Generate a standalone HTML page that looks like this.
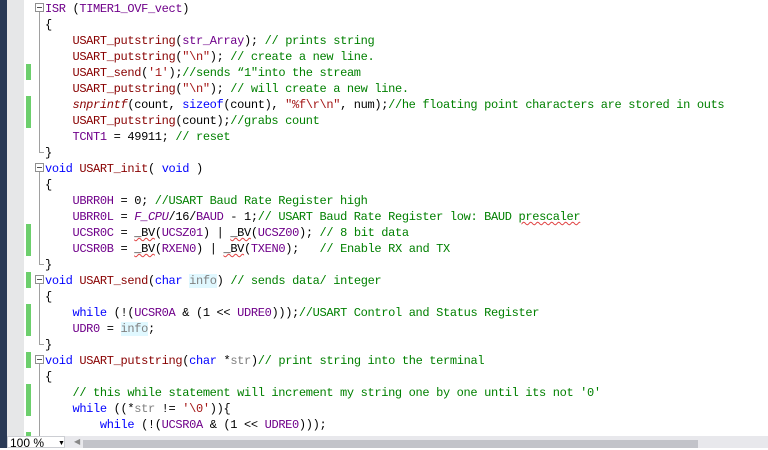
<!DOCTYPE html>
<html><head><meta charset="utf-8"><style>
body{margin:0;width:768px;height:448px;overflow:hidden;background:#fff;position:relative;font-family:"Liberation Mono",monospace;}
#nav{position:absolute;left:0;top:0;width:7px;height:448px;background:#293955;}
#gut{position:absolute;left:7px;top:0;width:17px;height:436px;background:#e6e7e8;}
.l{position:absolute;left:45px;height:16px;line-height:18px;font-size:12px;letter-spacing:-0.34px;white-space:pre;color:#000;}
.g{position:absolute;left:26px;width:5px;height:16px;background:#6ccf6c;}
.vl{position:absolute;left:39px;width:1px;background:#a0a0a0;}
.tk{position:absolute;left:39px;width:5px;height:1px;background:#a0a0a0;}
.fb{position:absolute;left:35px;width:7px;height:7px;border:1px solid #909090;background:#fff;}
.fb:after{content:"";position:absolute;left:1px;top:3px;width:5px;height:1px;background:#505050;}
.k{color:#0000ff}.m{color:#6f008a}.f{color:#880000}.c{color:#008000}.s{color:#a31515}.p{color:#808080}.i{font-style:italic}
.h{background:#e0f8ff}
.sq{text-decoration:underline wavy #e04040;text-decoration-thickness:1px;}
#bar{position:absolute;left:7px;top:436px;width:761px;height:12px;background:#e8e8ec;}
#zoom{position:absolute;left:7px;top:436px;width:58px;height:12px;background:#fff;border:1px solid #ccced3;font:12px "Liberation Sans",sans-serif;line-height:13px;padding-left:2px;box-sizing:border-box;}
#thumb{position:absolute;left:83px;top:440px;width:615px;height:8px;background:#c2c3c9;}
</style></head><body>
<div id="nav"></div><div id="gut"></div>
<div class="g" style="top:64px"></div>
<div class="g" style="top:96px;height:32px"></div>
<div class="g" style="top:224px;height:32px"></div>
<div class="g" style="top:272px"></div>
<div class="g" style="top:304px;height:32px"></div>
<div class="g" style="top:352px"></div>
<div class="g" style="top:384px;height:32px"></div>
<div class="g" style="top:432px;height:4px"></div>
<div class="vl" style="top:12px;height:140px"></div><div class="tk" style="top:152px"></div>
<div class="vl" style="top:172px;height:92px"></div><div class="tk" style="top:264px"></div>
<div class="vl" style="top:284px;height:60px"></div><div class="tk" style="top:344px"></div>
<div class="vl" style="top:364px;height:72px"></div>
<div class="fb" style="top:3px"></div>
<div class="fb" style="top:163px"></div>
<div class="fb" style="top:275px"></div>
<div class="fb" style="top:355px"></div>
<div class="l" style="top:0px"><span class="m">ISR</span> (<span class="m">TIMER1_OVF_vect</span>)</div>
<div class="l" style="top:16px">{</div>
<div class="l" style="top:32px">    <span class="f">USART_putstring</span>(<span class="m">str_Array</span>); <span class="c">// prints string</span></div>
<div class="l" style="top:48px">    <span class="f">USART_putstring</span>(<span class="s">"\n"</span>); <span class="c">// create a new line.</span></div>
<div class="l" style="top:64px">    <span class="f">USART_send</span>(<span class="s">'1'</span>);<span class="c">//sends “1"into the stream</span></div>
<div class="l" style="top:80px">    <span class="f">USART_putstring</span>(<span class="s">"\n"</span>); <span class="c">// will create a new line.</span></div>
<div class="l" style="top:96px">    <span class="f i">snprintf</span>(count, <span class="k">sizeof</span>(count), <span class="s">"%f\r\n"</span>, num);<span class="c">//he floating point characters are stored in outs</span></div>
<div class="l" style="top:112px">    <span class="f">USART_putstring</span>(count);<span class="c">//grabs count</span></div>
<div class="l" style="top:128px">    <span class="m">TCNT1</span> = 49911; <span class="c">// reset</span></div>
<div class="l" style="top:144px">}</div>
<div class="l" style="top:160px"><span class="k">void</span> <span class="f">USART_init</span>( <span class="k">void</span> )</div>
<div class="l" style="top:176px">{</div>
<div class="l" style="top:192px">    <span class="m">UBRR0H</span> = 0; <span class="c">//USART Baud Rate Register high</span></div>
<div class="l" style="top:208px">    <span class="m">UBRR0L</span> = <span class="m i">F_CPU</span>/16/<span class="m">BAUD</span> - 1;<span class="c">// USART Baud Rate Register low: BAUD <span class="sq">prescaler</span></span></div>
<div class="l" style="top:224px">    <span class="m">UCSR0C</span> = <span class="sq">_BV</span>(<span class="m">UCSZ01</span>) | <span class="sq">_BV</span>(<span class="m">UCSZ00</span>); <span class="c">// 8 bit data</span></div>
<div class="l" style="top:240px">    <span class="m">UCSR0B</span> = <span class="sq">_BV</span>(<span class="m">RXEN0</span>) | <span class="sq">_BV</span>(<span class="m">TXEN0</span>);   <span class="c">// Enable RX and TX</span></div>
<div class="l" style="top:256px">}</div>
<div class="l" style="top:272px"><span class="k">void</span> <span class="f">USART_send</span>(<span class="k">char</span> <span class="p h">info</span>) <span class="c">// sends data/ integer</span></div>
<div class="l" style="top:288px">{</div>
<div class="l" style="top:304px">    <span class="k">while</span> (!(<span class="m">UCSR0A</span> &amp; (1 &lt;&lt; <span class="m">UDRE0</span>)));<span class="c">//USART Control and Status Register</span></div>
<div class="l" style="top:320px">    <span class="m">UDR0</span> = <span class="p h">info</span>;</div>
<div class="l" style="top:336px">}</div>
<div class="l" style="top:352px"><span class="k">void</span> <span class="f">USART_putstring</span>(<span class="k">char</span> *<span class="p">str</span>)<span class="c">// print string into the terminal</span></div>
<div class="l" style="top:368px">{</div>
<div class="l" style="top:384px">    <span class="c">// this while statement will increment my string one by one until its not '0'</span></div>
<div class="l" style="top:400px">    <span class="k">while</span> ((*<span class="p">str</span> != <span class="s">'\0'</span>)){</div>
<div class="l" style="top:416px">        <span class="k">while</span> (!(<span class="m">UCSR0A</span> &amp; (1 &lt;&lt; <span class="m">UDRE0</span>)));</div>
<div id="bar"></div>
<div id="zoom">100 %<span style="position:absolute;left:50px;top:0;font-size:7px">▼</span></div>
<div style="position:absolute;left:74px;top:437px;font-size:8px;color:#888;font-family:'DejaVu Sans',sans-serif">◀</div>
<div id="thumb"></div>
</body></html>
